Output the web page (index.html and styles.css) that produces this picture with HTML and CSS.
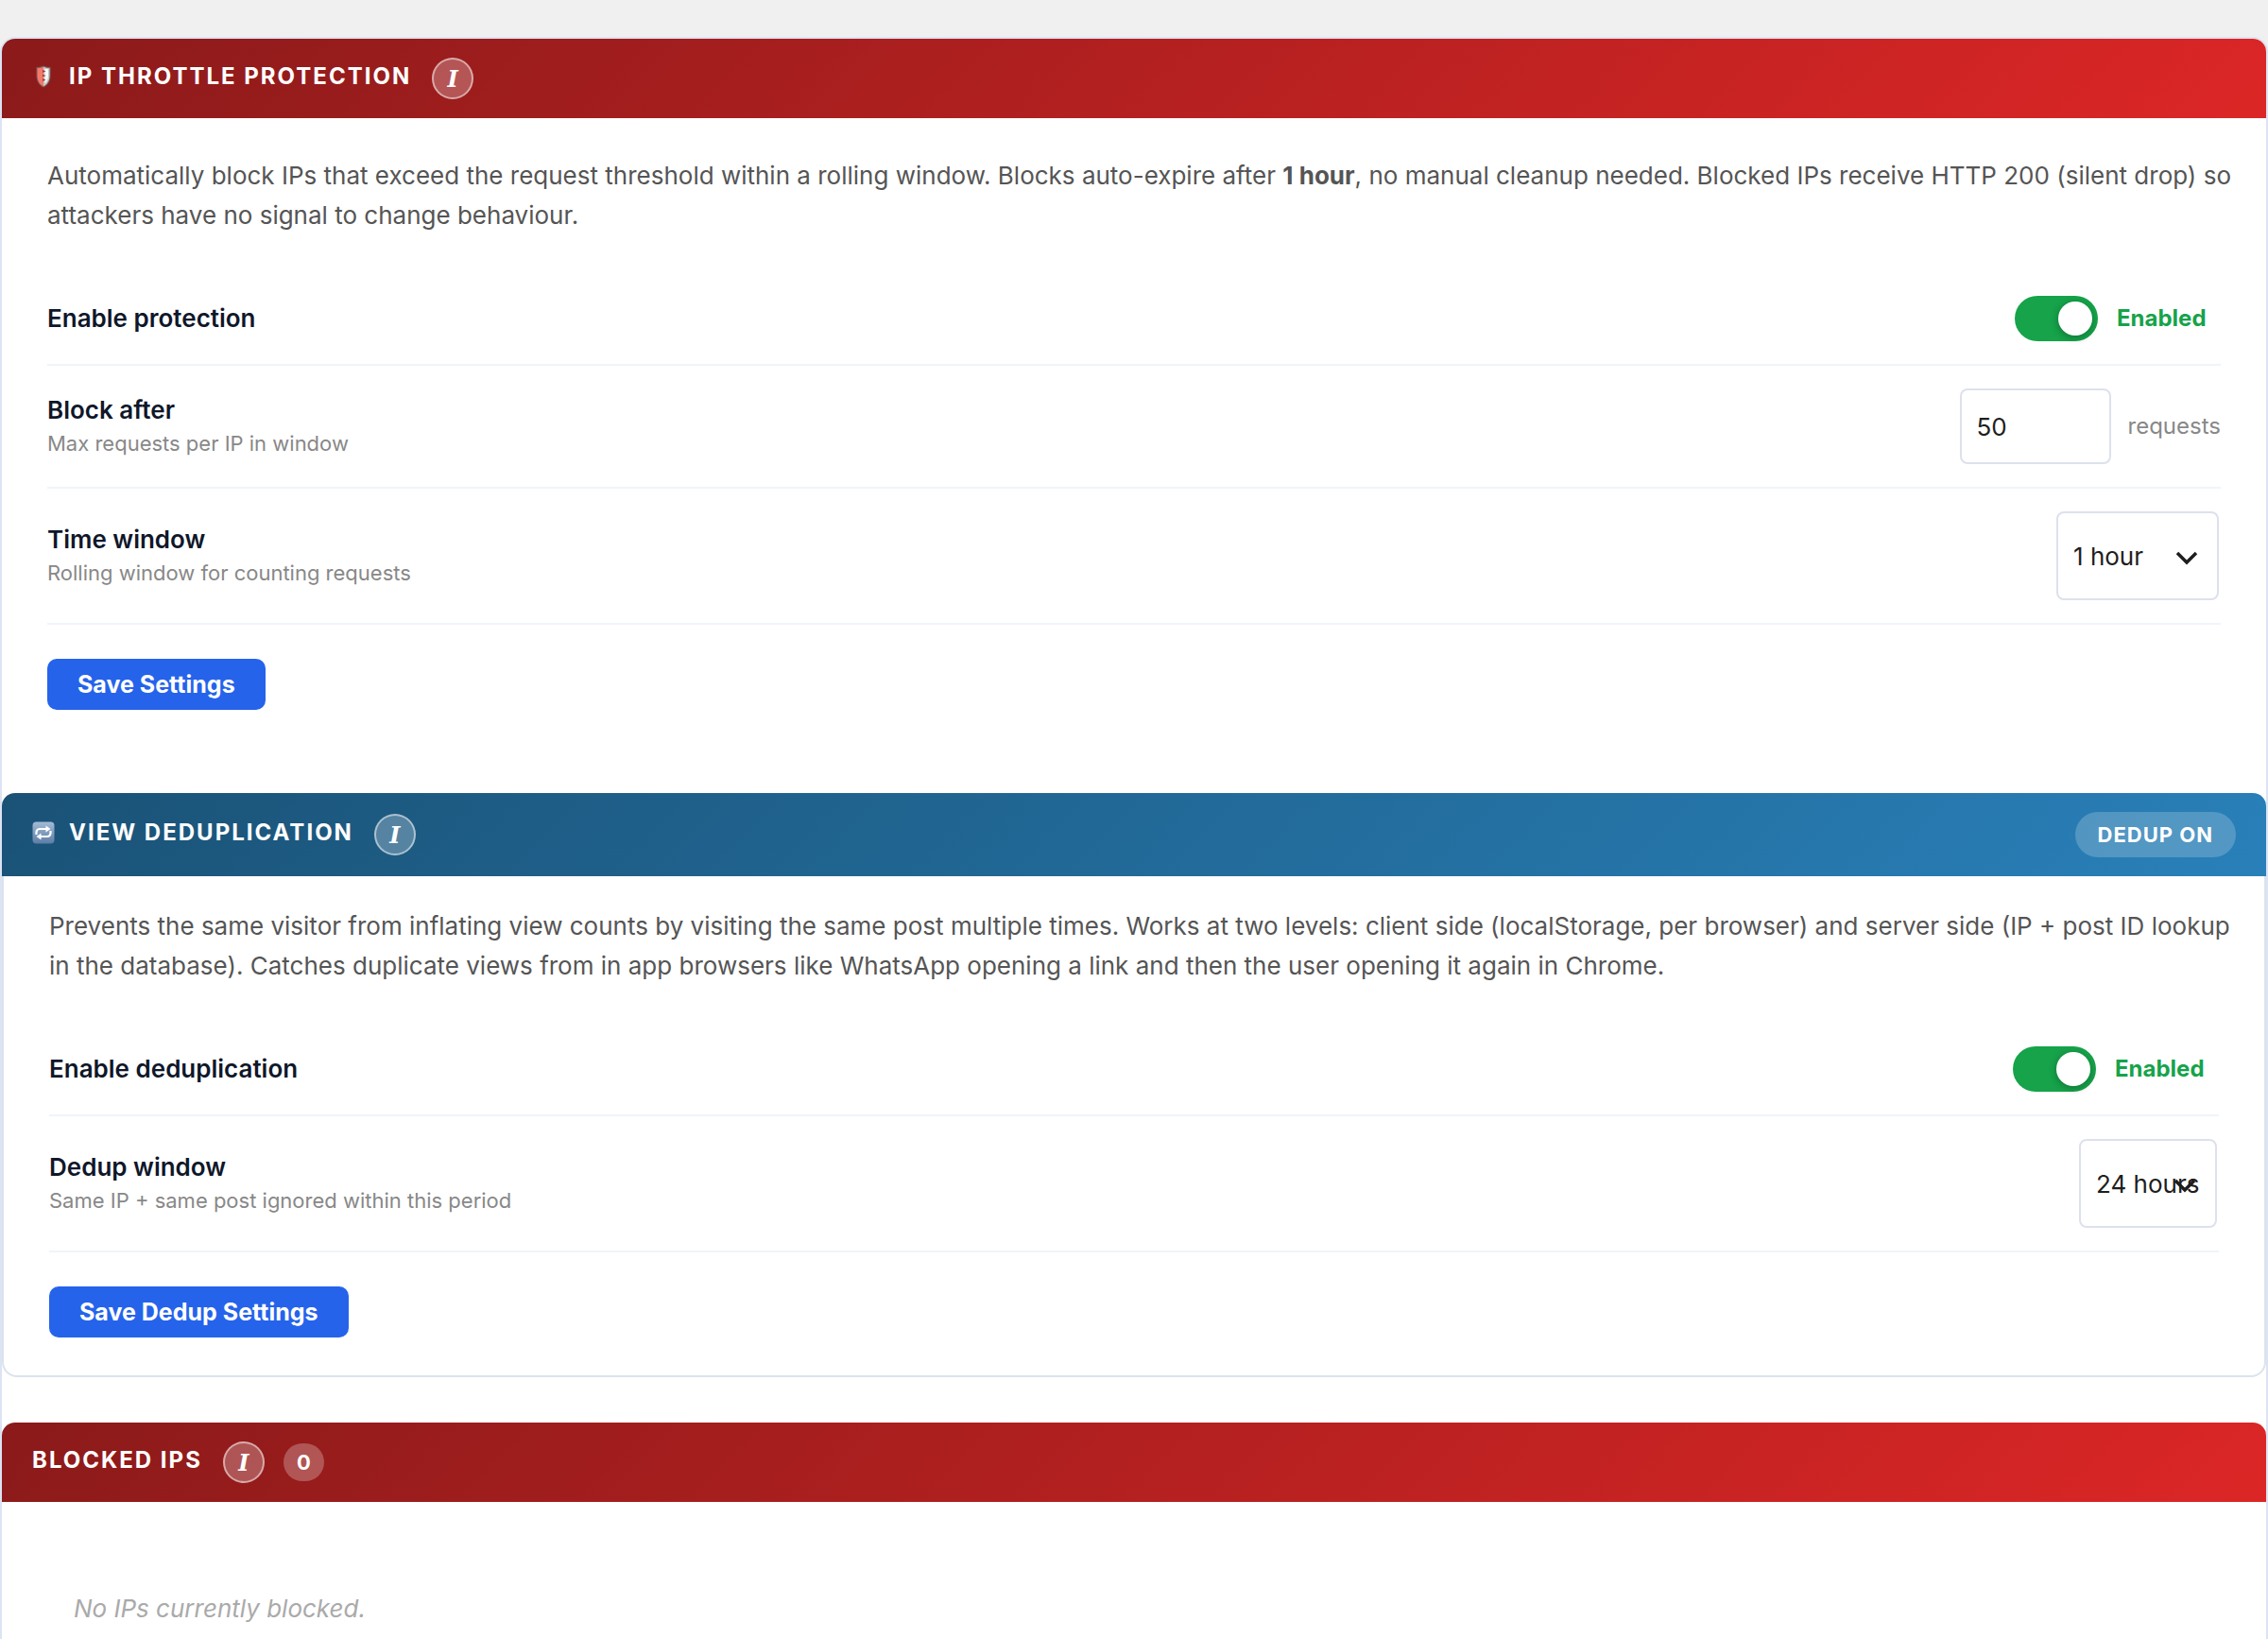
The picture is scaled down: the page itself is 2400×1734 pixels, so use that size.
FILE: index.html
```
<!DOCTYPE html>
<html lang="en">
<head>
    <meta charset="utf-8">
    <title>IP Throttle Protection</title>
    <link rel="stylesheet" href="styles.css">
</head>
<body>

<main class="panel">

    <!-- IP throttle -->
    <section class="section">
        <div class="section-header red">
            <h2 class="title">
                <svg class="icon" viewBox="0 0 24 24" aria-hidden="true">
                    <path d="M12 0.500C9.500 1.500 7 2 4.500 2V11c0 6 3 10.500 7.500 12.500C16.500 21.500 19.500 17 19.500 11V2C17 2 14.500 1.500 12 0.500z" fill="#7d5c5a"/>
                    <path d="M12 1.800C10 2.700 8 3.100 5.500 3.200V11c0 5.500 2.500 9.500 6.500 11.300z" fill="#f4796a"/>
                    <path d="M12 1.800c2 0.900 4 1.300 6.500 1.400V11c0 5.500-2.500 9.500-6.500 11.300z" fill="#c3c6c8"/>
                    <path d="M13.500 3.500c1 0.400 2.200 0.600 3.500 0.700V11c0 3.500-1.200 6.500-3.500 8.500z" fill="#f7f9f9"/>
                    <path d="M11 5l3.500 1.500L11 8zM11 9.500l3.500 1.500-3.500 1.500zM11 14l3.500 1.500L11 17z" fill="#a03c38"/>
                </svg>
                IP Throttle Protection
            </h2>
            <button class="info" type="button" aria-label="About IP throttle protection">I</button>
        </div>
        <div class="section-body">
            <p class="description">Automatically block IPs that exceed the request threshold within a rolling window. Blocks auto-expire after <strong>1 hour</strong>, no manual cleanup needed. Blocked IPs receive HTTP 200 (silent drop) so attackers have no signal to change behaviour.</p>

            <div class="row">
                <div class="row-label">Enable protection</div>
                <label class="toggle">
                    <input type="checkbox" class="switch" aria-label="Enable protection" checked>
                    <span class="toggle-text">Enabled</span>
                </label>
            </div>
            <div class="row">
                <div>
                    <label class="row-label" for="block-after">Block after</label>
                    <div class="hint">Max requests per IP in window</div>
                </div>
                <div class="field">
                    <input class="number" id="block-after" type="text" inputmode="numeric" value="50">
                    <span class="unit">requests</span>
                </div>
            </div>
            <div class="row">
                <div>
                    <label class="row-label" for="time-window">Time window</label>
                    <div class="hint">Rolling window for counting requests</div>
                </div>
                <select class="select" id="time-window">
                    <option>1 hour</option>
                </select>
            </div>

            <button class="save" type="button">Save Settings</button>
        </div>
    </section>

    <!-- View dedup -->
    <section class="section">
        <div class="section-header blue">
            <h2 class="title">
                <svg class="icon" viewBox="0 0 24 24" aria-hidden="true">
                    <defs>
                        <linearGradient id="tile" x1="0" y1="0" x2="0" y2="1">
                            <stop offset="0" stop-color="#a3bbd6"/>
                            <stop offset="1" stop-color="#5c7da6"/>
                        </linearGradient>
                    </defs>
                    <rect x="0.500" y="0.500" width="23" height="23" rx="4" fill="url(#tile)"/>
                    <path d="M4.500 14V11.500a3.500 3.500 0 0 1 3.500-3.500H15M19.500 10V12.500a3.500 3.500 0 0 1-3.500 3.500H9" fill="none" stroke="#fff" stroke-width="2.200"/>
                    <path d="M14.500 4.500L19.500 8l-5 3.500zM9.500 12.500L4.500 16l5 3.500z" fill="#fff"/>
                </svg>
                View Deduplication
            </h2>
            <button class="info" type="button" aria-label="About view deduplication">I</button>
            <span class="status">DEDUP ON</span>
        </div>
        <div class="section-body bordered">
            <p class="description">Prevents the same visitor from inflating view counts by visiting the same post multiple times. Works at two levels: client side (localStorage, per browser) and server side (IP + post ID lookup in the database). Catches duplicate views from in app browsers like WhatsApp opening a link and then the user opening it again in Chrome.</p>

            <div class="row">
                <div class="row-label">Enable deduplication</div>
                <label class="toggle">
                    <input type="checkbox" class="switch" aria-label="Enable deduplication" checked>
                    <span class="toggle-text">Enabled</span>
                </label>
            </div>
            <div class="row">
                <div>
                    <label class="row-label" for="dedup-window">Dedup window</label>
                    <div class="hint">Same IP + same post ignored within this period</div>
                </div>
                <select class="select narrow" id="dedup-window">
                    <option>24 hours</option>
                </select>
            </div>

            <button class="save" type="button">Save Dedup Settings</button>
        </div>
    </section>

    <!-- Blocked list -->
    <section class="section">
        <div class="section-header red">
            <h2 class="title">Blocked IPs</h2>
            <button class="info" type="button" aria-label="About blocked IPs">I</button>
            <span class="count">0</span>
        </div>
        <p class="empty">No IPs currently blocked.</p>
    </section>

</main>

</body>
</html>
```
FILE: styles.css
```
* {
    box-sizing: border-box;
}

body {
    margin: 0;
    padding-top: 39px;
    min-height: 100vh;
    display: flex;
    flex-direction: column;
    background-color: #f0f0f0;
    font-family: Inter, "Liberation Sans", sans-serif;
    font-size: 26px;
    line-height: 42px;
    color: #555;
}

button,
input,
select {
    font-family: inherit;
    margin: 0;
}

.panel {
    flex: 1;
    background-color: #fff;
    border: 2px solid #dce3f3;
    border-bottom: none;
    border-radius: 16px 16px 0 0;
}

/* Section headers */
.section-header {
    display: flex;
    align-items: center;
    gap: 20px;
    padding: 20px 32px;
    border-radius: 14px 14px 0 0;
    color: #fff;
}

.section-header.red {
    background: linear-gradient(135deg, #8b1a1a, #dc2626);
}

.section-header.blue {
    background: linear-gradient(135deg, #1a5276, #2980b9);
}

.title {
    display: flex;
    align-items: center;
    gap: 15px;
    margin: 0 2px 4px 0;
    font-size: 24px;
    line-height: 36px;
    font-weight: 700;
    letter-spacing: 2px;
    text-transform: uppercase;
}

.icon {
    width: 24px;
    height: 24px;
}

.info {
    width: 44px;
    height: 44px;
    padding: 0;
    border: 2px solid rgba(255, 255, 255, 0.5);
    border-radius: 50%;
    background-color: rgba(255, 255, 255, 0.25);
    color: #fff;
    font-family: "DejaVu Serif", serif;
    font-size: 24px;
    font-weight: 700;
    font-style: italic;
    cursor: pointer;
}

.status,
.count {
    border-radius: 24px;
    color: #fff;
    font-size: 22px;
    font-weight: 700;
}

.status {
    margin-left: auto;
    padding: 0 24px;
    line-height: 48px;
    letter-spacing: 1px;
    background-color: rgba(255, 255, 255, 0.2);
}

.count {
    padding: 0 14px;
    line-height: 40px;
    background-color: rgba(255, 255, 255, 0.25);
}

/* Section content */
.section-body {
    padding: 40px 48px 88px;
}

.section-body.bordered {
    margin-bottom: 48px;
    padding: 32px 48px 40px;
    border: 2px solid #dce3ee;
    border-top: none;
    border-radius: 0 0 16px 16px;
}

.description {
    margin: 0 -16px 40px 0;
}

.row {
    display: flex;
    align-items: center;
    justify-content: space-between;
    padding: 24px 0;
    border-bottom: 2px solid #f0f4fa;
}

.row-label {
    display: block;
    line-height: 36px;
    font-weight: 600;
    color: #0f172a;
}

.hint {
    font-size: 22px;
    line-height: 34px;
    color: #888;
}

/* Controls */
.toggle {
    display: flex;
    align-items: center;
    gap: 20px;
    height: 48px;
    cursor: pointer;
}

.switch {
    appearance: none;
    width: 88px;
    height: 48px;
    padding: 6px;
    border-radius: 24px;
    background-color: #ccc;
    cursor: pointer;
}

.switch::before {
    content: "";
    display: block;
    width: 36px;
    height: 36px;
    border-radius: 50%;
    background-color: #fff;
    box-shadow: 0 2px 8px rgba(0, 0, 0, 0.3);
}

.switch:checked {
    background-color: #16a34a;
}

.switch:checked::before {
    margin-left: auto;
}

.toggle-text {
    min-width: 110px;
    font-size: 24px;
    font-weight: 700;
    color: #16a34a;
}

.field {
    display: flex;
    align-items: center;
    gap: 18px;
}

.number,
.select {
    border: 2px solid #dce1ec;
    border-radius: 8px;
    background-color: #fff;
    color: #1e1e1e;
    font-size: 26px;
}

.number {
    width: 160px;
    height: 80px;
    padding: 0 16px;
}

.unit {
    font-size: 24px;
    color: #888;
}

.select {
    appearance: none;
    width: 172px;
    height: 94px;
    margin-right: 2px;
    padding: 0 16px;
    background-image: url("data:image/svg+xml,%3Csvg xmlns='http://www.w3.org/2000/svg' width='24' height='16' viewBox='0 0 24 16'%3E%3Cpath d='M2 3l10 10 10-10' fill='none' stroke='%231e1e1e' stroke-width='3.500'/%3E%3C/svg%3E");
    background-repeat: no-repeat;
    background-position: right 20px top 39px;
}

.select.narrow {
    width: 146px;
}

.save {
    display: block;
    height: 54px;
    margin-top: 36px;
    padding: 0 32px;
    border: none;
    border-radius: 10px;
    background-color: #2563eb;
    color: #fff;
    font-size: 25px;
    font-weight: 700;
    cursor: pointer;
}

.save:hover {
    background-color: #1d4ed8;
}

.empty {
    margin: 0;
    padding: 92px 76px 0;
    font-style: italic;
    color: #aaa;
}
```
